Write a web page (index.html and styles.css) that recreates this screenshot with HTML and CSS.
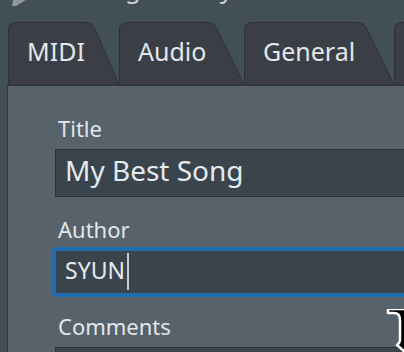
FILE: index.html
```html
<!DOCTYPE html>
<html>
<head>
<meta name="viewport" content="width=device-width, initial-scale=1">
<link rel="stylesheet" href="styles.css">
</head>
<body>

<div class="titlebar">
<svg class="appicon" width="16" height="6" viewBox="0 0 16 6"><polygon points="3,0 16,0 6,6 2,6" fill="#8d979d"/></svg>
<span class="wintitle">Song Library</span>
</div>

<div class="tabs">
<div class="tab t1">
<svg class="tabshape" width="111" height="62" viewBox="0 0 111 62"><path d="M0.5,62 V8 Q0.5,0.5 8,0.5 H78 Q84,0.5 87,7 L110.5,62"/></svg>
<span>MIDI</span>
</div>
<div class="tab t2">
<svg class="tabshape" width="125" height="62" viewBox="0 0 125 62"><path d="M0.5,62 V8 Q0.5,0.5 8,0.5 H88 Q95,0.5 98,7 L124.5,62"/></svg>
<span>Audio</span>
</div>
<div class="tab t3">
<svg class="tabshape" width="150" height="62" viewBox="0 0 150 62"><path d="M0.5,62 V8 Q0.5,0.5 8,0.5 H113 Q120,0.5 123,7 L149.5,62"/></svg>
<span>General</span>
</div>
<div class="tab t4">
<svg class="tabshape" width="120" height="62" viewBox="0 0 120 62"><path d="M0.5,62 V8 Q0.5,0.5 8,0.5 H85 Q92,0.5 95,7 L119.5,62"/></svg>
</div>
</div>

<div class="panel">
<div class="field">
<div class="label">Title</div>
<div class="edit">My Best Song</div>
</div>
<div class="field">
<div class="label">Author</div>
<div class="edit focus">SYUN<span class="caret"></span></div>
</div>
<div class="field">
<div class="label">Comments</div>
<div class="edit multi"></div>
</div>
</div>

<svg class="pointer" width="20" height="44" viewBox="0 0 20 44"><path d="M2,4 H8 C12,4 14,7 14,11 V31 C14,34 12,35 11,36 L20,44 V0 H2 Z" fill="#000" stroke="#fff" stroke-width="2.5" stroke-linejoin="round"/></svg>

</body>
</html>
```

FILE: styles.css
```css
html,body{margin:0;padding:0;}
body{width:404px;height:352px;overflow:hidden;position:relative;background-color:#434f57;font-family:"Noto Sans","Open Sans",sans-serif;color:#e1e7eb;}
.titlebar{display:flex;align-items:flex-start;height:22px;padding-left:10px;}
.appicon{display:block;}
.wintitle{font-size:26px;line-height:30px;margin-top:-27px;margin-left:53px;color:#c9d0d4;white-space:nowrap;}
.tabs{display:flex;height:62px;margin-left:8px;}
.tab{position:relative;flex:none;height:62px;}
.tab span{position:relative;display:block;padding:12px 0 0 19px;font-size:25px;line-height:normal;}
.tabshape{position:absolute;top:0;left:0;}
.tabshape path{fill:#3b3f45;stroke:#2b3136;stroke-width:1;}
.t1{width:111px;}
.t2{width:125px;}
.t3{width:150px;}
.t4{width:120px;}
.panel{margin-left:7px;height:300px;border-left:1px solid #363e44;border-top:2px solid #30373c;background-color:#58626a;padding:27px 0 0 47px;}
.field + .field{margin-top:17px;}
.label{font-size:22px;line-height:30px;padding-left:3px;margin-bottom:6px;}
.edit{box-sizing:border-box;width:400px;height:48px;border:1px solid #2a3238;background-color:#39444d;padding-left:9px;font-size:28px;line-height:40px;color:#e4eaee;white-space:nowrap;}
.edit.focus{height:50px;margin:-3px 0 -3px -3px;border:4px solid #1f6db0;border-radius:4px;font-size:23px;line-height:38px;}
.caret{display:inline-block;vertical-align:top;width:2px;height:37px;margin:2px 0 0 2px;background-color:#c5cacd;}
.edit.multi{height:120px;}
.pointer{position:absolute;left:386px;top:309px;}
```
